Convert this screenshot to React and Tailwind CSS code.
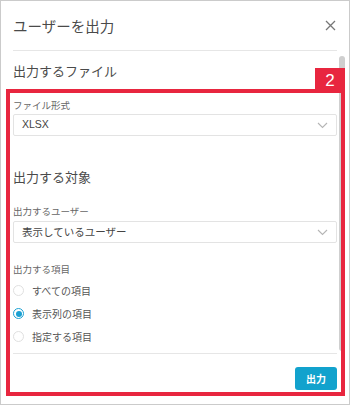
import React, { useState } from "react";

const jp = { fontFamily: '"Noto Sans CJK JP", "Liberation Sans", sans-serif' };
const latin = { fontFamily: '"Liberation Sans", "Noto Sans CJK JP", sans-serif' };

const Chevron = () => (
  <svg width="11" height="7" viewBox="0 0 11 7" fill="none">
    <path d="M1 1l4.5 4.5L10 1" stroke="#b5b5b5" strokeWidth="1.1" />
  </svg>
);

const Select = ({ value, latinText }) => (
  <div className="h-[22px] flex items-center justify-between border border-[#e3e3e3] rounded-[2px] pl-[8px] pr-[8px] bg-white">
    <span className="text-[10.5px] text-[#444]" style={latinText ? latin : jp}>
      {value}
    </span>
    <Chevron />
  </div>
);

const Radio = ({ label, checked, onClick }) => (
  <div className="h-[23px] flex items-center cursor-pointer" onClick={onClick}>
    <span
      className={
        checked
          ? "w-[11px] h-[11px] rounded-full border border-[#1aa0d2] flex items-center justify-center bg-white"
          : "w-[11px] h-[11px] rounded-full border border-[#e0e0e0] bg-white"
      }
    >
      {checked && <span className="w-[6px] h-[6px] rounded-full bg-[#1aa0d2]" />}
    </span>
    <span className="ml-[8px] text-[10px] text-[#555]" style={jp}>
      {label}
    </span>
  </div>
);

export default function App() {
  const [target, setTarget] = useState(1);
  const items = ["すべての項目", "表示列の項目", "指定する項目"];

  return (
    <div className="relative w-[350px] h-[405px] bg-white border border-[#cbcbcb] overflow-hidden" style={jp}>
      <div className="h-[50px] mx-[12px] flex items-center justify-between border-b border-[#e6e6e6]">
        <span className="text-[14.5px] text-[#4a4a4a]">ユーザーを出力</span>
        <svg width="11" height="11" viewBox="0 0 11 11" className="mr-[1px]">
          <path d="M1 1l9 9M10 1l-9 9" stroke="#777" strokeWidth="1.3" />
        </svg>
      </div>

      <div className="mx-[12px]">
        <div className="mt-[10px] h-[20px] leading-[20px] text-[13px] text-[#4a4a4a]">出力するファイル</div>

        <div className="mt-[17px] h-[14px] leading-[14px] text-[9.5px] text-[#666]">ファイル形式</div>
        <div className="mt-[2px]">
          <Select value="XLSX" latinText />
        </div>

        <div className="mt-[31px] h-[20px] leading-[20px] text-[13px] text-[#4a4a4a]">出力する対象</div>

        <div className="mt-[17px] h-[14px] leading-[14px] text-[9.5px] text-[#666]">出力するユーザー</div>
        <div className="mt-[3px]">
          <Select value="表示しているユーザー" />
        </div>

        <div className="mt-[19px] h-[14px] leading-[14px] text-[9.5px] text-[#666]">出力する項目</div>
        <div className="mt-[3px]">
          {items.map((label, i) => (
            <Radio key={label} label={label} checked={target === i} onClick={() => setTarget(i)} />
          ))}
        </div>

        <div className="mt-[5px] border-t border-[#e6e6e6]" />
        <div className="mt-[13px] flex justify-end">
          <button
            type="button"
            className="w-[42px] h-[23px] rounded-[3px] bg-[#12a2cd] text-white text-[10px] font-bold"
          >
            出力
          </button>
        </div>
      </div>

      {/* scrollbar thumb */}
      <div className="absolute left-[338px] top-[55px] w-[6px] h-[295px] rounded-[3px] bg-[#cfcfcf]" />

      {/* annotation overlay */}
      <div className="absolute left-[5px] top-[88px] w-[339px] h-[307px] border-[4px] border-[#e8263f] pointer-events-none" />
      <div className="absolute left-[314px] top-[67px] w-[30px] h-[25px] bg-[#e8263f] flex items-center justify-center pointer-events-none">
        <span className="text-white text-[17px] leading-none" style={latin}>
          2
        </span>
      </div>
    </div>
  );
}
